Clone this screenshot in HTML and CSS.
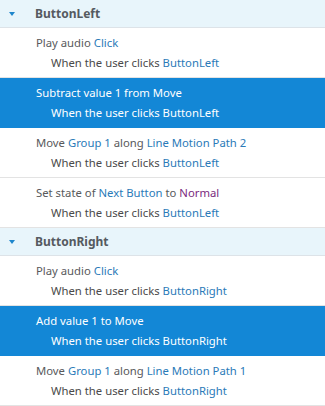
FILE: index.html
```html
<!DOCTYPE html>
<html>
<head>
<meta charset="utf-8">
<link rel="stylesheet" href="styles.css">
</head>
<body>
<div class="list">
  <div class="group">
    <div class="ghead"><span class="caret"></span><span class="gname">ButtonLeft</span></div>
    <div class="item">
      <div class="act">Play audio <span class="k">Click</span></div>
      <div class="trig">When the user clicks <span class="k">ButtonLeft</span></div>
    </div>
    <div class="item sel">
      <div class="act">Subtract value <span class="k">1</span> from <span class="k">Move</span></div>
      <div class="trig">When the user clicks <span class="k">ButtonLeft</span></div>
    </div>
    <div class="item">
      <div class="act">Move <span class="k">Group 1</span> along <span class="k">Line Motion Path 2</span></div>
      <div class="trig">When the user clicks <span class="k">ButtonLeft</span></div>
    </div>
    <div class="item">
      <div class="act">Set state of <span class="k">Next Button</span> to <span class="p">Normal</span></div>
      <div class="trig">When the user clicks <span class="k">ButtonLeft</span></div>
    </div>
  </div>
  <div class="group">
    <div class="ghead"><span class="caret"></span><span class="gname">ButtonRight</span></div>
    <div class="item">
      <div class="act">Play audio <span class="k">Click</span></div>
      <div class="trig">When the user clicks <span class="k">ButtonRight</span></div>
    </div>
    <div class="item sel">
      <div class="act">Add value <span class="k">1</span> to <span class="k">Move</span></div>
      <div class="trig">When the user clicks <span class="k">ButtonRight</span></div>
    </div>
    <div class="item">
      <div class="act">Move <span class="k">Group 1</span> along <span class="k">Line Motion Path 1</span></div>
      <div class="trig">When the user clicks <span class="k">ButtonRight</span></div>
    </div>
  </div>
</div>
</body>
</html>
```
FILE: styles.css
```css
html, body {
  margin: 0;
  padding: 0;
  background: #ffffff;
}
body {
  font-family: "Segoe UI", "Noto Sans", "Open Sans", sans-serif;
  font-size: 11.3px;
  color: #58595b;
}
.list {
  width: 325px;
}
.ghead {
  height: 27px;
  background: #e8f5fb;
  border-bottom: 1px solid #dde3e8;
  display: flex;
  align-items: center;
}
.caret {
  width: 0;
  height: 0;
  border-left: 3.5px solid transparent;
  border-right: 3.5px solid transparent;
  border-top: 4px solid #1e86cc;
  margin-left: 9px;
  margin-right: 20px;
}
.gname {
  font-weight: bold;
  font-size: 12px;
  color: #555a60;
}
.item {
  height: 49px;
  border-bottom: 1px solid #e3e3e3;
  padding-left: 36px;
  display: flex;
  flex-direction: column;
  justify-content: center;
}
.act {
  line-height: 20px;
}
.trig {
  line-height: 20px;
  padding-left: 15px;
  color: #4a4a4a;
}
.k {
  color: #2a7ab8;
}
.p {
  color: #7b2a7e;
}
.sel {
  background: #1387d6;
  border-bottom-color: #1387d6;
  color: #ffffff;
}
.sel .trig, .sel .k, .sel .p {
  color: #ffffff;
}
```
